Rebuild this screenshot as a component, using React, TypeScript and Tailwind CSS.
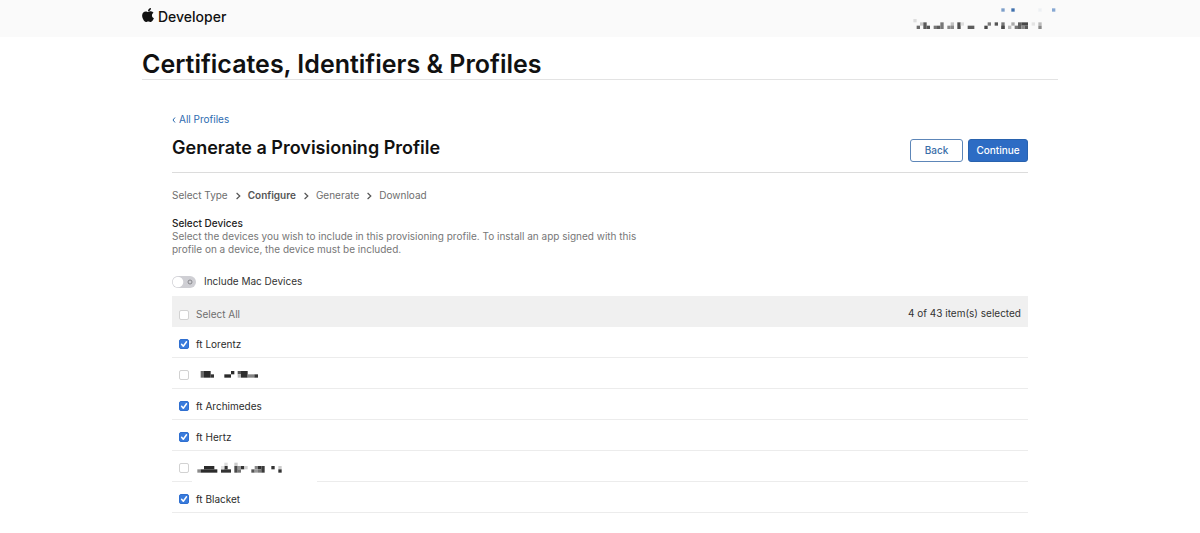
import { useState } from "react";

type Block = [x: number, y: number, w: number, h: number, fill: string];

const ACCOUNT_BLOCKS: Block[] = [
  [40, 57, 10, 10, "#dedede"], [50, 77, 10, 10, "#6b6b6b"], [60, 67, 10, 10, "#c9c9c9"],
  [70, 67, 10, 20, "#5a5a5a"], [80, 77, 10, 10, "#555555"], [101, 77, 10, 10, "#777777"],
  [111, 77, 10, 10, "#5c5c5c"], [121, 67, 10, 20, "#777777"], [142, 77, 10, 10, "#888888"],
  [152, 67, 10, 20, "#c4c4c4"], [152, 77, 10, 10, "#8a8a8a"], [172, 67, 10, 20, "#505050"],
  [182, 67, 10, 10, "#dddddd"], [203, 77, 20, 10, "#5c5c5c"], [253, 77, 10, 10, "#484848"],
  [263, 67, 10, 10, "#7a7a7a"], [284, 67, 10, 10, "#555555"], [304, 67, 10, 20, "#777777"],
  [304, 77, 10, 10, "#4a4a4a"], [324, 77, 10, 10, "#bbbbbb"], [334, 67, 10, 10, "#aaaaaa"],
  [344, 77, 10, 10, "#777777"], [354, 67, 10, 20, "#606060"], [364, 67, 20, 10, "#484848"],
  [364, 77, 10, 10, "#888888"], [374, 77, 10, 10, "#5a5a5a"], [395, 67, 10, 10, "#e4e4e4"],
  [415, 67, 10, 10, "#bbbbbb"], [415, 77, 10, 10, "#888888"],
  [304, 25, 10, 10, "#7d9fc9"], [334, 25, 10, 10, "#3f70ad"], [415, 25, 10, 10, "#edf0f3"],
  [456, 25, 10, 10, "#86a8d3"],
];

const SECOND_BLOCKS: Block[] = [
  [14, 0, 10, 20, "#6a6a6a"], [24, 0, 20, 20, "#2b2b2b"], [44, 10, 10, 10, "#333333"],
  [85, 10, 20, 10, "#2b2b2b"], [105, 0, 10, 10, "#2b2b2b"], [125, 0, 10, 10, "#555555"],
  [125, 10, 10, 10, "#b5b5b5"], [135, 0, 20, 20, "#2e2e2e"], [155, 10, 20, 10, "#848484"],
  [175, 10, 11, 10, "#333333"],
];

const FIFTH_BLOCKS: Block[] = [
  [4, 22, 10, 10, "#8a8a8a"], [14, 22, 50, 10, "#2b2b2b"], [24, 12, 31, 10, "#2b2b2b"],
  [75, 22, 30, 10, "#333333"], [85, 12, 10, 10, "#333333"], [85, 2, 10, 10, "#dddddd"],
  [75, 12, 10, 10, "#e0e0e0"], [115, 2, 10, 10, "#cccccc"], [115, 12, 10, 20, "#4a4a4a"],
  [125, 12, 10, 10, "#999999"], [125, 22, 10, 10, "#777777"], [135, 12, 10, 10, "#333333"],
  [145, 12, 10, 10, "#d0d0d0"], [166, 22, 10, 10, "#555555"], [176, 12, 10, 10, "#888888"],
  [176, 22, 10, 10, "#999999"], [186, 12, 10, 10, "#333333"], [186, 22, 10, 10, "#777777"],
  [196, 12, 10, 20, "#3a3a3a"], [226, 12, 10, 10, "#333333"], [247, 12, 10, 10, "#cccccc"],
  [247, 22, 10, 10, "#333333"],
];

function Blocks({ blocks }: { blocks: Block[] }) {
  return (
    <>
      {blocks.map(([x, y, w, h, fill], i) => (
        <rect key={i} x={x} y={y} width={w} height={h} fill={fill} />
      ))}
    </>
  );
}

function AppleLogo() {
  return (
    <svg viewBox="0 32 384 448" className="h-[14px] w-3" fill="currentColor" aria-hidden="true">
      <path d="M318.700 268.700c-.2-36.700 16.400-64.400 50-84.800-18.800-26.900-47.200-41.700-84.700-44.600-35.500-2.800-74.300 20.700-88.500 20.700-15 0-49.400-19.700-76.400-19.700C63.300 141.200 4 184.800 4 273.500q0 39.300 14.400 81.200c12.800 36.700 59 126.700 107.200 125.200 25.200-.6 43-17.900 75.800-17.900 31.800 0 48.300 17.900 76.400 17.900 48.600-.7 90.400-82.500 102.600-119.300-65.200-30.700-61.700-90-61.700-91.900zm-56.600-164.200c27.300-32.400 24.800-61.900 24-72.500-24.100 1.400-52 16.400-67.900 34.900-17.500 19.800-27.800 44.300-25.600 71.900 26.100 2 49.900-11.400 69.500-34.300z" />
    </svg>
  );
}

function Chevron() {
  return (
    <svg viewBox="0 0 6 8" className="mx-[7px] h-2 w-[6px]" fill="none" stroke="#555" strokeWidth="1.2" aria-hidden="true">
      <path d="M1.600 1 4.800 4 1.600 7" />
    </svg>
  );
}

function CheckBox({ id, checked, onChange }: { id: string; checked: boolean; onChange: () => void }) {
  return (
    <span className="grid size-[10px] shrink-0">
      <input
        id={id}
        type="checkbox"
        checked={checked}
        onChange={onChange}
        className="col-start-1 row-start-1 size-[10px] appearance-none rounded-[2px] border border-[#d2d2d2] bg-white checked:border-[#2f6fd0] checked:bg-[#397bdc]"
      />
      {checked && (
        <svg viewBox="0 0 10 10" className="pointer-events-none col-start-1 row-start-1 size-[10px]" fill="none" stroke="white" strokeWidth="1.5" strokeLinecap="round" strokeLinejoin="round" aria-hidden="true">
          <path d="M2.600 5.200 4.300 7.200 7.500 2.800" />
        </svg>
      )}
    </span>
  );
}

type Device = { id: string; name?: string; blocks?: Block[]; selected: boolean };

const DEVICES: Device[] = [
  { id: "lorentz", name: "ft Lorentz", selected: true },
  { id: "device-2", blocks: SECOND_BLOCKS, selected: false },
  { id: "archimedes", name: "ft Archimedes", selected: true },
  { id: "hertz", name: "ft Hertz", selected: true },
  { id: "device-5", blocks: FIFTH_BLOCKS, selected: false },
  { id: "blacket", name: "ft Blacket", selected: true },
];

const STEPS = ["Select Type", "Configure", "Generate", "Download"];

export default function App() {
  const [devices, setDevices] = useState(DEVICES);
  const [includeMac, setIncludeMac] = useState(false);
  const count = devices.filter((d) => d.selected).length;
  const all = count === devices.length;

  return (
    <div className="min-h-screen bg-white font-['Inter','Liberation_Sans',sans-serif] text-[10px] leading-[13px] text-[#333]">
      <header className="bg-[#fafafa]">
        <div className="mx-auto flex h-[37px] max-w-[916px] items-start justify-between">
          <a href="#" className="flex items-start gap-1 pt-2 text-[14px] leading-[18px] font-medium text-[#111]">
            <AppleLogo />
            Developer
          </a>
          <svg viewBox="0 0 474 111" className="h-[37px] w-[158px]" role="img" aria-label="Account">
            <Blocks blocks={ACCOUNT_BLOCKS} />
          </svg>
        </div>
      </header>

      <main className="mx-auto max-w-[916px]">
        <h1 className="border-b border-[#e3e3e3] pt-3 text-[25px] leading-[30px] font-semibold text-[#111]">
          Certificates, Identifiers &amp; Profiles
        </h1>

        <div className="px-[30px] pt-[33px]">
          <a href="#" className="inline-flex items-center gap-[3px] text-[#2d6bb0]">
            <svg viewBox="0 0 4 6" className="mt-px h-[6px] w-1" fill="none" stroke="currentColor" aria-hidden="true">
              <path d="M3 .5 1 3 3 5.500" />
            </svg>
            All Profiles
          </a>

          <div className="flex items-start justify-between border-b border-[#dcdcdc] pt-2.5 pb-2.5">
            <h2 className="pb-0.5 text-[18px] leading-6 font-semibold text-[#111]">Generate a Provisioning Profile</h2>
            <div className="flex gap-[5px] self-end">
              <button type="button" className="h-[23px] w-[53px] rounded-[3px] border border-[#5d86b8] bg-white font-medium text-[#3a6ea8]">
                Back
              </button>
              <button type="button" className="h-[23px] w-[60px] rounded-[3px] border border-[#2862ae] bg-[#2d6cc4] font-medium text-white">
                Continue
              </button>
            </div>
          </div>

          <ol className="flex items-center pt-4 text-[#6e6e6e]">
            {STEPS.map((step, i) => (
              <li key={step} className="flex items-center">
                {i > 0 && <Chevron />}
                <span className={step === "Configure" ? "font-semibold text-[#555]" : ""}>{step}</span>
              </li>
            ))}
          </ol>

          <section className="max-w-[475px] pt-[15px]">
            <h3 className="font-medium text-[#222]">Select Devices</h3>
            <p className="text-[#777]">
              Select the devices you wish to include in this provisioning profile. To install an app signed with this
              profile on a device, the device must be included.
            </p>
          </section>

          <label className="flex w-fit items-center gap-2 pt-[19px]">
            <span className="grid items-center">
              <input
                type="checkbox"
                role="switch"
                checked={includeMac}
                onChange={() => setIncludeMac(!includeMac)}
                className="col-start-1 row-start-1 h-3 w-6 appearance-none rounded-full bg-[#cfcfd4] checked:bg-[#34c759]"
              />
              <svg viewBox="0 0 24 12" className="pointer-events-none col-start-1 row-start-1 h-3 w-6" aria-hidden="true">
                <circle cx={includeMac ? 18 : 6} cy="6" r="5.300" fill="white" />
                {!includeMac && <circle cx="18" cy="6" r="2" fill="none" stroke="#77777c" strokeWidth=".8" />}
              </svg>
            </span>
            Include Mac Devices
          </label>

          <div className="mt-2 flex h-[31px] items-center justify-between bg-[#f0f0f0] px-[7px]">
            <div className="flex items-center gap-[7px] pt-1.5 text-[#6e6e6e]">
              <CheckBox
                id="select-all"
                checked={all}
                onChange={() => setDevices(devices.map((d) => ({ ...d, selected: !all })))}
              />
              <label htmlFor="select-all">Select All</label>
            </div>
            <span className="pt-1">{count} of 43 item(s) selected</span>
          </div>

          <ul>
            {devices.map((device) => (
              <li key={device.id} className="relative flex h-[31px] items-center gap-[7px] border-b border-[#ececec] px-[7px] pt-1">
                <CheckBox
                  id={device.id}
                  checked={device.selected}
                  onChange={() =>
                    setDevices(devices.map((d) => (d.id === device.id ? { ...d, selected: !d.selected } : d)))
                  }
                />
                <label htmlFor={device.id} className="text-[#2c2c2c]">
                  {device.name}
                  {device.blocks && (
                    <svg
                      viewBox={device.id === "device-5" ? "0 0 270 36" : "0 -6 270 36"}
                      className="h-3 w-[90px]"
                      role="img"
                      aria-label="Device"
                    >
                      <Blocks blocks={device.blocks} />
                    </svg>
                  )}
                </label>
                {device.id === "device-5" && <span className="absolute -bottom-px left-5 h-px w-[125px] bg-white" />}
              </li>
            ))}
          </ul>
        </div>
      </main>
    </div>
  );
}
